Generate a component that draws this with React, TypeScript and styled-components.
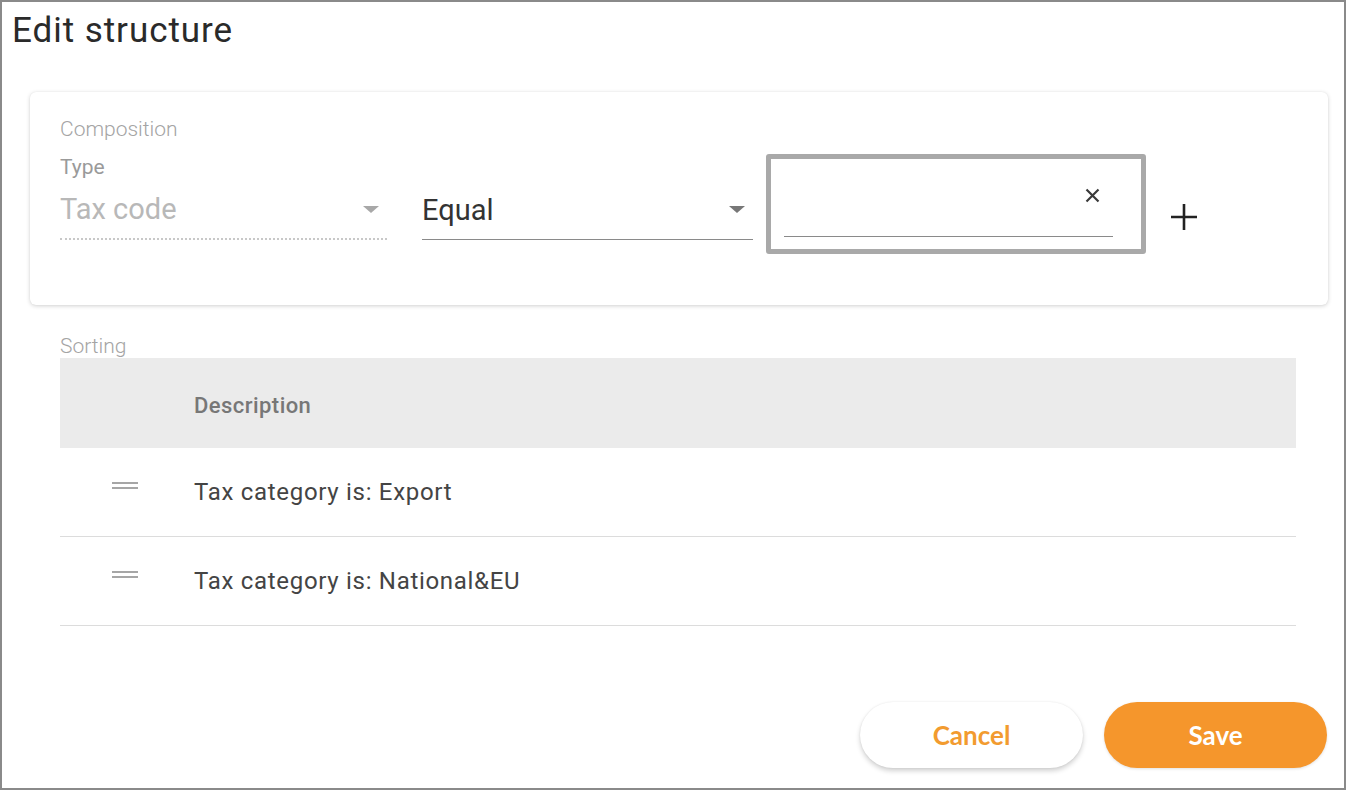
import React from "react";
import styled, { createGlobalStyle } from "styled-components";

const Global = createGlobalStyle`
  html, body { margin: 0; padding: 0; background: #fff; }
  body { font-family: Roboto, "Noto Sans", sans-serif; }
  * { box-sizing: border-box; }
`;

const Frame = styled.div`
  width: 1346px;
  height: 790px;
  border: 2px solid #8a8a8a;
  background: #fff;
  display: flex;
  flex-direction: column;
`;

const Title = styled.h1`
  margin: 9px 0 0 10px;
  font-family: Roboto, sans-serif;
  font-weight: 400;
  font-size: 35px;
  letter-spacing: 0.95px;
  line-height: 40px;
  color: #2a2a2a;
`;

const Card = styled.section`
  margin: 41px 16px 0 28px;
  height: 213px;
  border-radius: 6px;
  background: #fff;
  box-shadow: 0 1px 4px rgba(0, 0, 0, 0.18), 0 0 1px rgba(0, 0, 0, 0.08);
  padding: 24px 30px 0 30px;
`;

const SectionLabel = styled.div`
  font-family: Roboto, sans-serif;
  font-weight: 300;
  font-size: 21px;
  line-height: 26px;
  height: 26px;
  color: #a4a4a4;
`;

const FieldRow = styled.div`
  display: flex;
  align-items: flex-start;
`;

const Field = styled.div<{ $w: number; $ml?: number }>`
  width: ${(p) => p.$w}px;
  margin-left: ${(p) => p.$ml ?? 0}px;
  display: flex;
  flex-direction: column;
`;

const SmallLabel = styled.div`
  margin-top: 12px;
  font-size: 21px;
  line-height: 26px;
  color: #9a9a9a;
  height: 26px;
`;

const SelectBox = styled.div<{ $disabled?: boolean }>`
  height: 60px;
  display: flex;
  align-items: center;
  justify-content: space-between;
  font-size: 29px;
  color: ${(p) => (p.$disabled ? "#b8b8b8" : "#333")};
  border-bottom: ${(p) => (p.$disabled ? "2px dotted #c8c8c8" : "1.5px solid #8a8a8a")};
`;

const Caret = styled.span<{ $light?: boolean }>`
  width: 0;
  height: 0;
  margin-right: 8px;
  border-left: 8px solid transparent;
  border-right: 8px solid transparent;
  border-top: 7px solid ${(p) => (p.$light ? "#a8a8a8" : "#777")};
`;

const InputFrame = styled.div`
  flex: none;
  margin-left: 13px;
  margin-top: 12px;
  width: 380px;
  height: 100px;
  border: 5px solid #a9a9a9;
  border-radius: 3px;
  padding: 0 28px 12px 13px;
  display: flex;
  flex-direction: column;
`;

const InputLine = styled.div`
  flex: 1;
  border-bottom: 1.5px solid #8a8a8a;
  display: flex;
  align-items: flex-start;
  justify-content: flex-end;
  padding-top: 28px;
  padding-right: 12px;
`;

const PlusButton = styled.button`
  margin: 57px 0 0 20px;
  border: 0;
  background: none;
  padding: 0;
  width: 36px;
  height: 36px;
  display: flex;
  align-items: center;
  justify-content: center;
  cursor: pointer;
`;

const Sorting = styled.div`
  margin: 29px 48px 0 58px;
  display: flex;
  flex-direction: column;
`;

const SortLabel = styled(SectionLabel)`
  height: 24px;
  line-height: 24px;
`;

const HeaderRow = styled.div`
  height: 90px;
  background: #ebebeb;
  display: flex;
  align-items: center;
  padding-left: 134px;
  padding-top: 4px;
  font-size: 22px;
  letter-spacing: 0.45px;
  font-weight: 500;
  color: #777;
`;

const Row = styled.div`
  height: 89px;
  display: flex;
  align-items: center;
  border-bottom: 1px solid #dcdcdc;
  font-size: 24px;
  letter-spacing: 0.7px;
  color: #444;
`;

const Handle = styled.div`
  width: 134px;
  display: flex;
  justify-content: flex-start;
  padding-left: 52px;
  margin-top: -12px;
`;

const Footer = styled.div`
  margin-top: auto;
  display: flex;
  justify-content: flex-end;
  gap: 21px;
  padding: 0 17px 20px 0;
`;

const Btn = styled.button<{ $primary?: boolean }>`
  width: 223px;
  height: 66px;
  border-radius: 33px;
  border: 0;
  font-family: Lato, sans-serif;
  font-weight: 700;
  font-size: 26px;
  color: ${(p) => (p.$primary ? "#fff" : "#f29b2f")};
  background: ${(p) => (p.$primary ? "#f5962c" : "#fff")};
  box-shadow: ${(p) =>
    p.$primary ? "0 1px 3px rgba(0,0,0,0.12)" : "0 3px 5px rgba(0,0,0,0.18), 0 0 2px rgba(0,0,0,0.08)"};
  cursor: pointer;
`;

const Hamburger = () => (
  <svg width="26" height="10" viewBox="0 0 26 10">
    <rect x="0" y="1" width="26" height="2" fill="#a6a6a6" />
    <rect x="0" y="6" width="26" height="2" fill="#a6a6a6" />
  </svg>
);

export default function App() {
  return (
    <>
      <Global />
      <Frame>
        <Title>Edit structure</Title>
        <Card>
          <SectionLabel>Composition</SectionLabel>
          <FieldRow>
            <Field $w={327}>
              <SmallLabel>Type</SmallLabel>
              <SelectBox $disabled>
                <span>Tax code</span>
                <Caret $light />
              </SelectBox>
            </Field>
            <Field $w={331} $ml={35}>
              <SmallLabel />
              <SelectBox>
                <span>Equal</span>
                <Caret />
              </SelectBox>
            </Field>
            <InputFrame>
              <InputLine>
                <svg width="17" height="17" viewBox="0 0 17 17">
                  <path d="M2.5 2.5 L14.5 14.5 M14.5 2.5 L2.5 14.5" stroke="#3a3a3a" strokeWidth="2.2" />
                </svg>
              </InputLine>
            </InputFrame>
            <PlusButton aria-label="add">
              <svg width="28" height="28" viewBox="0 0 28 28">
                <path d="M14 1 V27 M1 14 H27" stroke="#222" strokeWidth="2.6" />
              </svg>
            </PlusButton>
          </FieldRow>
        </Card>
        <Sorting>
          <SortLabel>Sorting</SortLabel>
          <HeaderRow>Description</HeaderRow>
          <Row>
            <Handle>
              <Hamburger />
            </Handle>
            Tax category is: Export
          </Row>
          <Row>
            <Handle>
              <Hamburger />
            </Handle>
            Tax category is: National&amp;EU
          </Row>
        </Sorting>
        <Footer>
          <Btn>Cancel</Btn>
          <Btn $primary>Save</Btn>
        </Footer>
      </Frame>
    </>
  );
}
